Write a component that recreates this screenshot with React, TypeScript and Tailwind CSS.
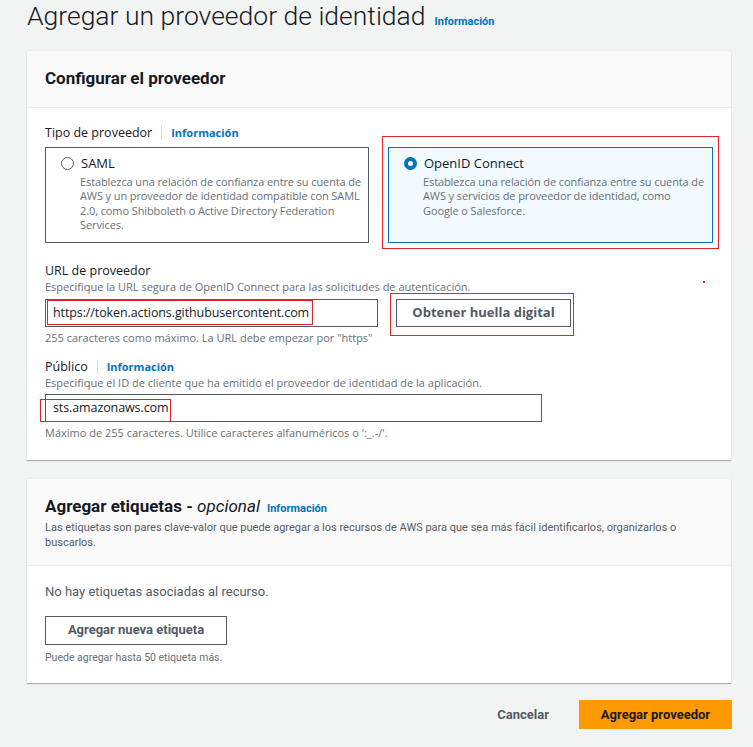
import React from "react";

const body = { fontFamily: '"Open Sans", Arial, sans-serif' };
const narrow = { fontFamily: 'Roboto, "Liberation Sans", sans-serif' };

function Info({ className = "" }: { className?: string }) {
  return (
    <span className={`text-[11px] font-bold text-[#0073bb] ${className}`} style={narrow}>
      Información
    </span>
  );
}

function Tile({
  title,
  desc,
  selected,
}: {
  title: string;
  desc: string;
  selected?: boolean;
}) {
  return (
    <div
      className={`w-[325px] h-[96px] border pl-[15px] pr-[6px] pt-[6px] ${
        selected ? "border-[#0073bb] bg-[#f1faff]" : "border-[#545b64] bg-white"
      }`}
    >
      <div className="flex items-center gap-[7px]">
        {selected ? (
          <span className="w-[13px] h-[13px] rounded-full border-[4px] border-[#0073bb] bg-white" />
        ) : (
          <span className="w-[13px] h-[13px] rounded-full border border-[#545b64] bg-white" />
        )}
        <span className="text-[13px] text-[#16191f]">{title}</span>
      </div>
      <p className="ml-[19px] mt-[1px] text-[11px] leading-[14.5px] tracking-[-0.1px] text-[#687078]">{desc}</p>
    </div>
  );
}

export default function App() {
  return (
    <div className="w-[753px] h-[747px] bg-[#f2f3f3] overflow-hidden" style={body}>
      <div className="pl-[27px] pr-[22px]">
        {/* Title */}
        <div className="flex items-baseline gap-[9px] h-[34px]">
          <h1 className="text-[26.5px] font-light text-[#16191f] leading-[32px]" style={narrow}>
            Agregar un proveedor de identidad
          </h1>
          <Info />
        </div>

        {/* Card 1 */}
        <div className="mt-[16px] bg-white shadow-[0_1px_1px_rgba(0,28,36,0.3)] border-t border-[#eaeded]">
          <div className="h-[57px] bg-[#fafafa] border-b border-[#eaeded] px-[18px] flex items-center">
            <h2 className="text-[17px] font-bold text-[#16191f]" style={narrow}>
              Configurar el proveedor
            </h2>
          </div>
          <div className="px-[18px] pt-[17px] pb-[20px]">
            <div className="flex items-center h-[16px]">
              <span className="text-[12.5px] text-[#16191f]">Tipo de proveedor</span>
              <span className="w-px h-[14px] bg-[#d5dbdb] mx-[9px]" />
              <span className="text-[11px] font-bold text-[#0073bb]">Información</span>
            </div>
            <div className="flex gap-[19px] mt-[6px]">
              <Tile
                title="SAML"
                desc="Establezca una relación de confianza entre su cuenta de AWS y un proveedor de identidad compatible con SAML 2.0, como Shibboleth o Active Directory Federation Services."
              />
              <div className="relative">
                <div className="absolute -left-[6px] -right-[6px] -top-[11px] -bottom-[6px] border border-[#e3242b]" />
                <Tile
                  selected
                  title="OpenID Connect"
                  desc="Establezca una relación de confianza entre su cuenta de AWS y servicios de proveedor de identidad, como Google o Salesforce."
                />
              </div>
            </div>

            {/* URL */}
            <div className="mt-[20px] text-[12.5px] text-[#16191f] leading-[16px]">URL de proveedor</div>
            <div className="text-[11px] text-[#687078] leading-[14px] mt-[1px] relative">
              Especifique la URL segura de OpenID Connect para las solicitudes de autenticación.
              <span className="absolute left-[658px] top-[1px] w-[2px] h-[2px] bg-[#e3242b]" />
            </div>
            <div className="flex items-center gap-[18px] mt-[5px]">
              <div className="relative w-[333px] h-[28px] border border-[#545b64] bg-white flex items-center">
                <span className="absolute left-[1px] top-[0px] w-[266px] h-[25px] border border-[#e3242b]" />
                <span className="ml-[7px] text-[12.5px] text-[#16191f] tracking-[-0.1px]">
                  https://token.actions.githubusercontent.com
                </span>
              </div>
              <div className="relative">
                <div className="absolute -left-[6px] -right-[3px] -top-[6px] -bottom-[9px] border border-[#e3242b]" />
                <button className="w-[175px] h-[28px] border border-[#545b64] bg-white text-[13px] font-bold text-[#545b64]">
                  Obtener huella digital
                </button>
              </div>
            </div>
            <div className="mt-[4px] text-[11px] text-[#687078] leading-[14px]">
              255 caracteres como máximo. La URL debe empezar por "https"
            </div>

            {/* Público */}
            <div className="flex items-center h-[16px] mt-[14px]">
              <span className="text-[12.5px] text-[#16191f]">Público</span>
              <span className="w-px h-[14px] bg-[#d5dbdb] mx-[9px]" />
              <span className="text-[11px] font-bold text-[#0073bb]">Información</span>
            </div>
            <div className="text-[11px] text-[#687078] leading-[14px] mt-[1px]">
              Especifique el ID de cliente que ha emitido el proveedor de identidad de la aplicación.
            </div>
            <div className="mt-[4px] w-[497px] h-[28px] border border-[#545b64] bg-white flex items-center relative">
              <span className="absolute -left-[6px] top-[4px] w-[131px] h-[23px] border border-[#e3242b]" />
              <span className="ml-[7px] text-[12.5px] text-[#16191f] tracking-[-0.1px]">sts.amazonaws.com</span>
            </div>
            <div className="mt-[4px] text-[11px] text-[#687078] leading-[14px]">
              Máximo de 255 caracteres. Utilice caracteres alfanuméricos o ':_.-/'.
            </div>
          </div>
        </div>

        {/* Card 2 */}
        <div className="mt-[18px] bg-white shadow-[0_1px_1px_rgba(0,28,36,0.3)] border-t border-[#eaeded]" style={narrow}>
          <div className="h-[87px] bg-[#fafafa] border-b border-[#eaeded] px-[18px] pt-[15px]">
            <div className="flex items-baseline gap-[7px]">
              <h2 className="text-[17px] font-bold text-[#16191f]">
                Agregar etiquetas - <i className="font-normal">opcional</i>
              </h2>
              <Info />
            </div>
            <p className="text-[11px] text-[#545b64] leading-[15px] max-w-[632px]">
              Las etiquetas son pares clave-valor que puede agregar a los recursos de AWS para que sea más fácil identificarlos, organizarlos o buscarlos.
            </p>
          </div>
          <div className="px-[18px] pt-[16px] pb-[18px]">
            <div className="text-[13px] text-[#545b64]">No hay etiquetas asociadas al recurso.</div>
            <button className="mt-[14px] w-[182px] h-[29px] border border-[#545b64] bg-white text-[13px] font-bold text-[#545b64]">
              Agregar nueva etiqueta
            </button>
            <div className="mt-[5px] text-[10.5px] text-[#687078]">Puede agregar hasta 50 etiqueta más.</div>
          </div>
        </div>

        {/* Footer */}
        <div className="flex justify-end items-center gap-[30px] mt-[17px] -mr-[1px]" style={narrow}>
          <span className="text-[13px] font-bold text-[#545b64]">Cancelar</span>
          <button className="w-[153px] h-[29px] bg-[#ff9900] text-[13px] font-bold text-[#16191f]">
            Agregar proveedor
          </button>
        </div>
      </div>
    </div>
  );
}
